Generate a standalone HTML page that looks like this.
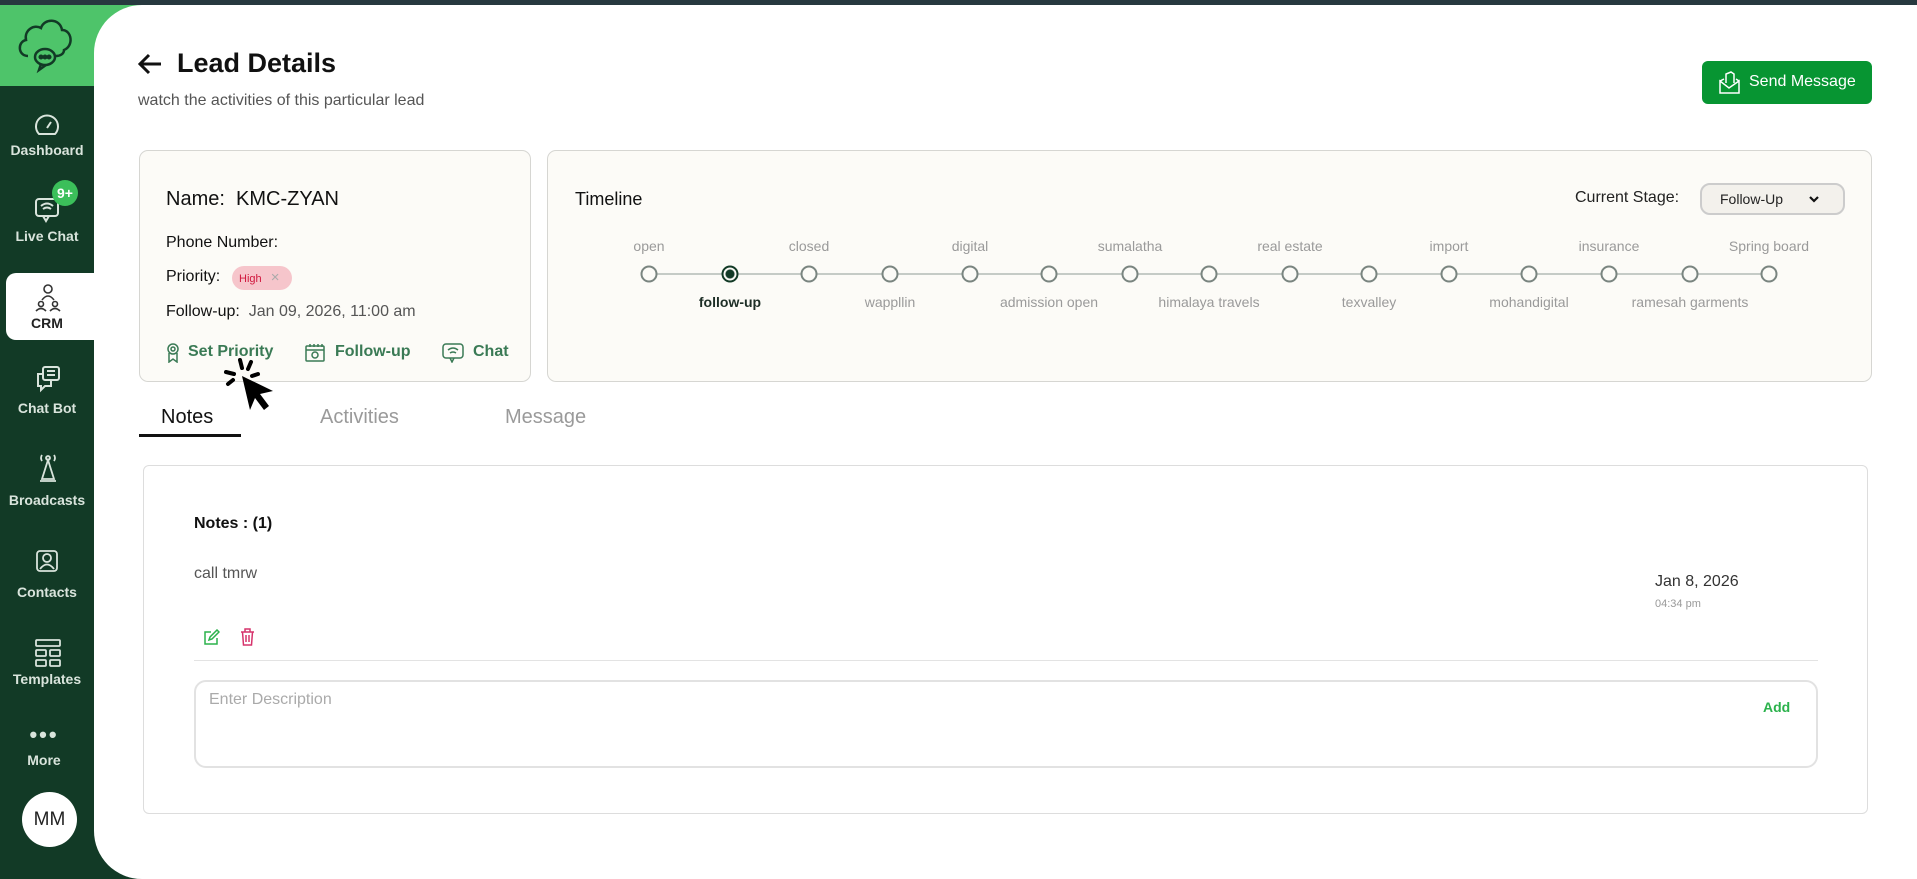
<!DOCTYPE html>
<html><head><meta charset="utf-8"><style>
*{box-sizing:border-box;margin:0;padding:0}
body{width:1917px;height:879px;overflow:hidden;background:#123a26;font-family:"Liberation Sans",sans-serif;position:relative}
.a{position:absolute;white-space:nowrap}
.top{left:0;top:0;width:1917px;height:5px;background:#27393f}
.gh{left:0;top:5px;width:200px;height:81px;background:#4ec46a}
.main{left:94px;top:5px;width:1823px;height:874px;background:#fff;border-radius:48px 0 0 48px}
.nav{left:0;width:94px;text-align:center;color:#d9e4dc;font-size:14px;font-weight:bold}
.card{background:#fcfbf7;border:1px solid #d6d6d2;border-radius:9px}
.tl{font-size:14px;color:#9a9a9a;transform:translateX(-50%)}
.dot{width:17px;height:17px;border:2px solid #7a8580;border-radius:50%;background:#fcfbf7;transform:translate(-50%,-50%)}
.act{font-size:16px;color:#3a7a55;font-weight:bold}
</style></head><body>
<div class="a top"></div>
<div class="a gh"></div>
<div class="a main"></div>
<svg class="a" style="left:14px;top:12px" width="62" height="62" viewBox="0 0 62 62" fill="none" stroke="#123a26" stroke-width="2.5"><path d="M14 44 C4 44 3 30 12 28 C10 18 20 12 27 16 C30 6 46 6 48 18 C58 18 60 34 50 38 C50 42 46 44 42 44"/><ellipse cx="31" cy="45" rx="10" ry="8"/><path d="M27 52 L25 58 L32 53"/><circle cx="27" cy="45" r="1.3" fill="#123a26"/><circle cx="31" cy="45" r="1.3" fill="#123a26"/><circle cx="35" cy="45" r="1.3" fill="#123a26"/></svg>
<svg class="a" style="left:34px;top:113px" width="26" height="26" viewBox="0 0 26 26" fill="none" stroke="#d9e4dc" stroke-width="2"><path d="M5 21 A11 11 0 1 1 21 21 Z"/><path d="M13 15 L17 9"/></svg>
<div class="a nav" style="top:142px">Dashboard</div>
<svg class="a" style="left:34px;top:195px" width="28" height="28" viewBox="0 0 28 28" fill="none" stroke="#d9e4dc" stroke-width="2"><rect x="2" y="4" width="22" height="17" rx="3"/><path d="M9 21 L12 26 L15 21"/><path d="M7 11 Q13 6 19 11 M9 14 Q13 11 17 14"/></svg>
<div class="a" style="left:52px;top:180px;width:26px;height:26px;border-radius:50%;background:#3bbf5a;color:#fff;font-size:14px;font-weight:bold;text-align:center;line-height:26px">9+</div>
<div class="a nav" style="top:228px">Live Chat</div>
<div class="a" style="left:6px;top:273px;width:94px;height:67px;background:#fff;border-radius:10px 0 0 10px"></div>
<svg class="a" style="left:34px;top:282px" width="28" height="30" viewBox="0 0 28 30" fill="none" stroke="#333" stroke-width="1.6"><circle cx="14" cy="7" r="4"/><path d="M8 18 Q14 10 20 18"/><circle cx="7" cy="22" r="2.5"/><circle cx="21" cy="22" r="2.5"/><path d="M2 29 Q7 24 12 29 M16 29 Q21 24 26 29"/></svg>
<div class="a nav" style="top:315px;color:#222">CRM</div>
<svg class="a" style="left:34px;top:365px" width="28" height="28" viewBox="0 0 28 28" fill="none" stroke="#d9e4dc" stroke-width="2"><rect x="9" y="2" width="16" height="13" rx="2"/><path d="M13 6h8M13 10h8"/><path d="M9 9 H4 V21 H7 V25 L11 21 H17 V15"/></svg>
<div class="a nav" style="top:400px">Chat Bot</div>
<svg class="a" style="left:34px;top:453px" width="28" height="30" viewBox="0 0 28 30" fill="none" stroke="#d9e4dc" stroke-width="1.8"><circle cx="14" cy="5" r="2"/><path d="M8 2 Q6 5 8 8 M20 2 Q22 5 20 8 M14 7 L8 26 H20 Z M6 28 H22"/></svg>
<div class="a nav" style="top:492px">Broadcasts</div>
<svg class="a" style="left:34px;top:548px" width="28" height="26" viewBox="0 0 28 26" fill="none" stroke="#d9e4dc" stroke-width="1.8"><rect x="3" y="3" width="20" height="20" rx="3"/><circle cx="13" cy="10" r="4"/><path d="M6 21 Q13 12 20 21"/></svg>
<div class="a nav" style="top:584px">Contacts</div>
<svg class="a" style="left:34px;top:638px" width="28" height="30" viewBox="0 0 28 30" fill="none" stroke="#d9e4dc" stroke-width="1.8"><rect x="2" y="2" width="24" height="6" rx="1"/><rect x="2" y="12" width="10" height="6" rx="1"/><rect x="16" y="12" width="10" height="6" rx="1"/><rect x="2" y="22" width="10" height="6" rx="1"/><rect x="16" y="22" width="10" height="6" rx="1"/></svg>
<div class="a nav" style="top:671px">Templates</div>
<div class="a nav" style="top:722px;font-size:22px;letter-spacing:2px;left:-3px">•••</div>
<div class="a nav" style="top:752px;left:-3px">More</div>
<div class="a" style="left:22px;top:792px;width:55px;height:55px;border-radius:50%;background:#fff;color:#222;font-size:19px;text-align:center;line-height:55px">MM</div>

<svg class="a" style="left:137px;top:52px" width="26" height="24" viewBox="0 0 26 24" fill="none" stroke="#111" stroke-width="3"><path d="M24 12 H4 M12 3 L3 12 L12 21"/></svg>
<div class="a" style="left:177px;top:48px;font-size:27px;font-weight:bold;color:#111">Lead Details</div>
<div class="a" style="left:138px;top:92px;font-size:16px;color:#555">watch the activities of this particular lead</div>
<div class="a" style="left:1702px;top:61px;width:170px;height:43px;background:#079532;border-radius:6px"></div>
<svg class="a" style="left:1719px;top:71px" width="22" height="24" viewBox="0 0 22 24" fill="none" stroke="#fff" stroke-width="1.5"><path d="M1 10 V22 H20 V10 L10 17 Z M1 10 L5 8 M20 10 L17 8 M7 12 V3 L12 1 L15 3 V12"/></svg>
<div class="a" style="left:1749px;top:73px;font-size:16px;color:#fff">Send Message</div>

<div class="a card" style="left:139px;top:150px;width:392px;height:232px"></div>
<div class="a" style="left:166px;top:188px;font-size:20px;color:#111">Name:&nbsp; KMC-ZYAN</div>
<div class="a" style="left:166px;top:234px;font-size:16px;color:#111">Phone Number:</div>
<div class="a" style="left:166px;top:268px;font-size:16px;color:#111">Priority:</div>
<div class="a" style="left:232px;top:266px;width:60px;height:24px;border-radius:12px;background:#f6c5cb;color:#d0163c;font-size:11px;line-height:24px;padding-left:7px">High <span style="color:#aaa;font-size:15px;margin-left:6px">×</span></div>
<div class="a" style="left:166px;top:303px;font-size:16px;color:#111">Follow-up: <span style="color:#555">&nbsp;Jan 09, 2026, 11:00 am</span></div>
<svg class="a" style="left:166px;top:343px" width="14" height="20" viewBox="0 0 14 20" fill="none" stroke="#3a7a55" stroke-width="1.5"><circle cx="7" cy="6" r="5"/><circle cx="7" cy="6" r="2"/><path d="M3 10 V19 L7 16 L11 19 V10"/></svg>
<div class="a act" style="left:188px;top:343px">Set Priority</div>
<svg class="a" style="left:305px;top:343px" width="20" height="19" viewBox="0 0 20 19" fill="none" stroke="#3a7a55" stroke-width="1.5"><rect x="1" y="3" width="18" height="15" rx="1"/><path d="M1 7 H19 M5 1 V4 M9 1 V4 M13 1 V4 M17 1 V4"/><circle cx="10" cy="12" r="3"/></svg>
<div class="a act" style="left:335px;top:343px">Follow-up</div>
<svg class="a" style="left:442px;top:343px" width="22" height="20" viewBox="0 0 22 20" fill="none" stroke="#3a7a55" stroke-width="1.5"><rect x="1" y="1" width="20" height="14" rx="3"/><path d="M8 15 L10 19 L12 15 M6 7 Q11 3 16 7 M8 10 Q11 8 14 10"/></svg>
<div class="a act" style="left:473px;top:343px">Chat</div>
<svg class="a" style="left:218px;top:354px" width="56" height="60" viewBox="0 0 56 60"><g stroke="#000" stroke-width="4" stroke-linecap="round"><path d="M22 6 L24 14 M8 18 L16 20 M10 30 L15 26 M33 8 L30 15 M40 20 L34 22"/></g><path d="M24 22 L32 56 L37 44 L46 56 L51 52 L42 40 L55 37 Z" fill="#000"/></svg>

<div class="a card" style="left:547px;top:150px;width:1325px;height:232px"></div>
<div class="a" style="left:575px;top:189px;font-size:18px;color:#111">Timeline</div>
<div class="a" style="left:1575px;top:189px;font-size:16px;color:#222">Current Stage:</div>
<div class="a" style="left:1700px;top:183px;width:145px;height:32px;border:2px solid #ccc;border-radius:10px;background:#f3f1ec;font-size:14px;color:#222;line-height:28px;padding-left:18px">Follow-Up</div>
<svg class="a" style="left:1808px;top:194px" width="12" height="10" viewBox="0 0 12 10" fill="none" stroke="#111" stroke-width="2.2"><path d="M2 3 L6 7 L10 3"/></svg>
<div class="a" style="left:649px;top:273px;width:1120px;height:2px;background:#c5cbc6"></div>
<div class="a dot" style="left:649px;top:274px"></div>
<div class="a dot" style="left:730px;top:274px;border-color:#123a26;background:radial-gradient(circle,#123a26 4px,#fcfbf7 5px)"></div>
<div class="a dot" style="left:809px;top:274px"></div>
<div class="a dot" style="left:890px;top:274px"></div>
<div class="a dot" style="left:970px;top:274px"></div>
<div class="a dot" style="left:1049px;top:274px"></div>
<div class="a dot" style="left:1130px;top:274px"></div>
<div class="a dot" style="left:1209px;top:274px"></div>
<div class="a dot" style="left:1290px;top:274px"></div>
<div class="a dot" style="left:1369px;top:274px"></div>
<div class="a dot" style="left:1449px;top:274px"></div>
<div class="a dot" style="left:1529px;top:274px"></div>
<div class="a dot" style="left:1609px;top:274px"></div>
<div class="a dot" style="left:1690px;top:274px"></div>
<div class="a dot" style="left:1769px;top:274px"></div>
<div class="a tl" style="left:649px;top:238px">open</div>
<div class="a tl" style="left:809px;top:238px">closed</div>
<div class="a tl" style="left:970px;top:238px">digital</div>
<div class="a tl" style="left:1130px;top:238px">sumalatha</div>
<div class="a tl" style="left:1290px;top:238px">real estate</div>
<div class="a tl" style="left:1449px;top:238px">import</div>
<div class="a tl" style="left:1609px;top:238px">insurance</div>
<div class="a tl" style="left:1769px;top:238px">Spring board</div>
<div class="a tl" style="left:730px;top:294px;color:#1d2e26;font-weight:bold">follow-up</div>
<div class="a tl" style="left:890px;top:294px">wappllin</div>
<div class="a tl" style="left:1049px;top:294px">admission open</div>
<div class="a tl" style="left:1209px;top:294px">himalaya travels</div>
<div class="a tl" style="left:1369px;top:294px">texvalley</div>
<div class="a tl" style="left:1529px;top:294px">mohandigital</div>
<div class="a tl" style="left:1690px;top:294px">ramesah garments</div>

<div class="a" style="left:161px;top:406px;font-size:20px;color:#111">Notes</div>
<div class="a" style="left:139px;top:434px;width:102px;height:3px;background:#111"></div>
<div class="a" style="left:320px;top:406px;font-size:20px;color:#9a9a9a">Activities</div>
<div class="a" style="left:505px;top:406px;font-size:20px;color:#9a9a9a">Message</div>

<div class="a" style="left:143px;top:465px;width:1725px;height:349px;border:1px solid #ddd;border-radius:6px;background:#fff"></div>
<div class="a" style="left:194px;top:515px;font-size:16px;font-weight:bold;color:#111">Notes : (1)</div>
<div class="a" style="left:194px;top:565px;font-size:16px;color:#555">call tmrw</div>
<div class="a" style="left:1655px;top:573px;font-size:16px;color:#333">Jan 8, 2026</div>
<div class="a" style="left:1655px;top:598px;font-size:11px;color:#999">04:34 pm</div>
<svg class="a" style="left:203px;top:629px" width="17" height="17" viewBox="0 0 17 17" fill="none" stroke="#2bb24c" stroke-width="1.5"><path d="M8 3 H2 V15 H14 V9 M6 11 L7 8 L14 1 L16 3 L9 10 Z"/></svg>
<svg class="a" style="left:240px;top:628px" width="15" height="18" viewBox="0 0 15 18" fill="none" stroke="#d6336c" stroke-width="1.5"><path d="M1 4 H14 M5 4 V1 H10 V4 M2.5 4 L3.5 17 H11.5 L12.5 4 M6 7 V14 M9 7 V14"/></svg>
<div class="a" style="left:194px;top:660px;width:1624px;height:1px;background:#e3e3e3"></div>
<div class="a" style="left:194px;top:680px;width:1624px;height:88px;border:2px solid #e2e2e2;border-radius:12px"></div>
<div class="a" style="left:209px;top:691px;font-size:16px;color:#aaa">Enter Description</div>
<div class="a" style="left:1763px;top:699px;font-size:14px;font-weight:bold;color:#2bb24c">Add</div>
</body></html>
